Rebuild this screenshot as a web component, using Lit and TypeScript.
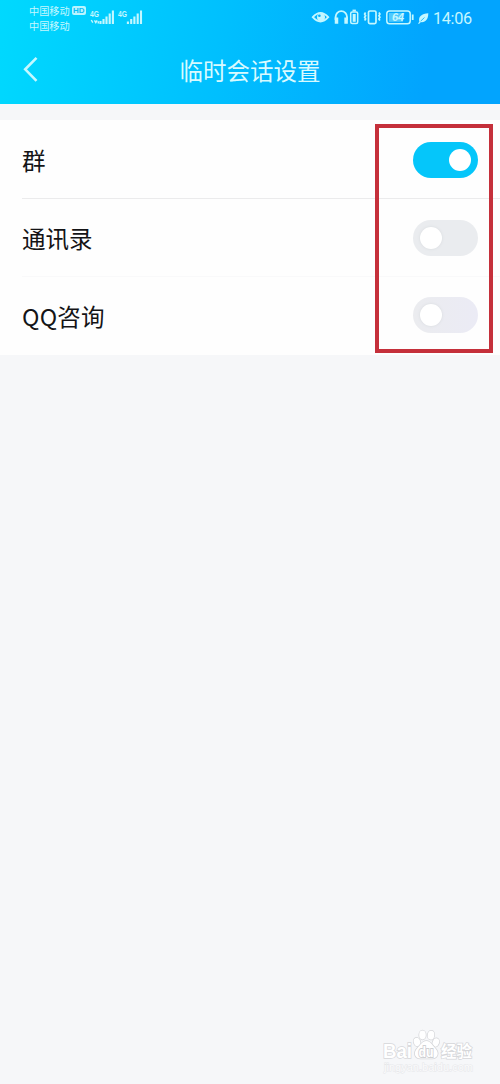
import { LitElement, html, css } from "lit";
import { customElement, property, state } from "lit/decorators.js";
import { classMap } from "lit/directives/class-map.js";

@customElement("status-bar")
class StatusBar extends LitElement {
  static styles = css`
    :host { display: flex; height: 36px; color: #c4f7ff; justify-content: space-between; }
    .left { display: flex; padding-left: 29px; }
    .carriers { display: flex; flex-direction: column; padding-top: 2.5px; font-size: 10.2px; line-height: 15.2px; white-space: nowrap; }
    .line { display: flex; align-items: center; height: 15.2px; }
    .hd { margin-left: 2px; width: 14px; height: 9px; border-radius: 2px; background: #b9f5ff; color: #08bdf8;
      font: bold 8px/9px "Liberation Sans", sans-serif; text-align: center; }
    .signal { margin-left: 3px; }
    svg { display: block; }
    .right { display: flex; padding-right: 28px; }
    .time { width: 39px; font: 16.3px/37px Roboto, sans-serif; letter-spacing: -.35px; margin-left: 2px; white-space: nowrap; }
    .g { font: bold 9px "Liberation Sans", sans-serif; fill: currentColor; }
    .level { font: italic bold 11px "Liberation Sans", sans-serif; fill: currentColor; }
  `;
  render() {
    return html`
      <div class="left">
        <div class="carriers">
          <div class="line">中国移动<span class="hd">HD</span></div>
          <div class="line">中国移动</div>
        </div>
        <svg class="signal" width="56" height="36" viewBox="89 0 56 36" fill="none">
          <text class="g" x="90" y="16.7" textLength="9" lengthAdjust="spacingAndGlyphs">4G</text>
          <path d="M91.300 20l1.500 2.600M94.500 20.300l1.300 2.300 1.300-2.300M98.300 21.300v2.200" stroke="currentColor" stroke-width="1.400"/>
          <path d="M100.500 21v3M103.500 19v5M106.500 16.500V24M109.700 13.500V24M112.900 10.500V24" stroke="currentColor" stroke-width="2.100"/>
          <text class="g" x="118" y="16.7" textLength="9" lengthAdjust="spacingAndGlyphs">4G</text>
          <path d="M127.900 21.500V24M131.200 19V24M134.400 16.500V24M137.700 13.500V24M141 10.500V24" stroke="currentColor" stroke-width="2.100"/>
        </svg>
      </div>
      <div class="right">
        <svg width="120" height="36" viewBox="311 0 120 36" fill="none" stroke="currentColor">
          <path d="M312.800 17.200Q320.500 8.600 328.200 17.200Q320.500 25.800 312.800 17.200Z" stroke-width="1.900"/>
          <circle cx="321" cy="17.200" r="4" fill="currentColor" stroke="none"/>
          <circle cx="319.400" cy="15.700" r="1.300" fill="#03aefd" stroke="none"/>
          <path d="M335.600 20V17a5.700 5.900 0 0 1 11.400 0v3" stroke-width="1.900"/>
          <path d="M336.500 17.500v6.200M346.100 17.500v6.200" stroke-width="3.500"/>
          <rect x="350.700" y="12" width="7" height="11.600" rx="1.500" stroke-width="1.500"/>
          <path d="M352.500 10.500h3.400" stroke-width="1.800"/><path d="M354.200 14v7.800" stroke-width="3"/>
          <rect x="368.500" y="11" width="7.500" height="12.600" rx="1.300" stroke-width="1.700"/>
          <path d="M365.600 12.500l-1 1.600 1 1.600-1 1.600 1 1.600-1 1.600M378.900 12.500l1 1.600-1 1.600 1 1.600-1 1.600 1 1.600" stroke-width="1.700"/>
          <rect x="386.800" y="11" width="23.400" height="12.800" rx="2.800" stroke-width="1.500"/>
          <rect x="389" y="13" width="14" height="8.800" fill="currentColor" opacity=".4" stroke="none"/>
          <text class="level" x="392" y="21.300" stroke="none">64</text>
          <path d="M412.700 14.500v5.500" stroke-width="1.800"/>
          <path d="M419.300 21.800c-1.300-5.400 2.500-8 9-8.500 0 6.500-3.600 10.300-9 8.500z" fill="currentColor" stroke="none"/>
          <path d="M420.500 21.300l4-3.800" stroke="#03aefd" stroke-width=".8"/><path d="M418.500 23.600l2-2" stroke-width="1.300"/>
        </svg>
        <div class="time">14:06</div>
      </div>`;
  }
}

@customElement("toggle-switch")
class ToggleSwitch extends LitElement {
  @property({ type: Boolean }) on = false;
  @property() tone = "";
  static styles = css`
    :host { display: block; }
    .track { display: flex; align-items: center; box-sizing: border-box; width: 65px; height: 36px; border-radius: 18px;
      padding: 0 7px; background: #eaecef; }
    .cool { background: linear-gradient(90deg, #ebecef, #ebebf5); }
    .on { background: #05c6fa; justify-content: flex-end; }
    .knob { width: 22px; height: 22px; border-radius: 50%; background: #fff; box-shadow: 0 0 3px #d7dade; }
    .on .knob { box-shadow: none; }
  `;
  render() {
    return html`<div class=${classMap({ track: true, on: this.on, cool: this.tone === "cool" })}><div class="knob"></div></div>`;
  }
}

@customElement("app-root")
class AppRoot extends LitElement {
  @state() rows = [
    { label: "群", on: true, tone: "" },
    { label: "通讯录", on: false, tone: "" },
    { label: "QQ咨询", on: false, tone: "cool" },
  ];
  static styles = css`
    :host { display: block; position: relative; height: 1084px; width: 500px; overflow: hidden; background: #f6f7f9;
      font-family: "Noto Sans CJK SC", sans-serif; }
    .header { height: 104px; background: linear-gradient(100deg, #00d9fe 0%, #00bffe 45%, #02a4fe 85%); }
    .nav { display: grid; grid-template-columns: 60px 1fr 60px; height: 68px; align-items: center; }
    .back { display: block; margin-left: 22px; }
    .title { color: #d8faff; font-size: 23.5px; line-height: 34px; text-align: center; white-space: nowrap; }
    .list { margin-top: 16px; background: #fefefe; height: 235px; }
    .row { display: flex; align-items: center; justify-content: space-between; box-sizing: border-box; height: 78px;
      margin-left: 22px; padding-right: 22px; color: #141416; font-size: 23.5px; line-height: 34px; }
    .row:first-child { padding-top: 2px; }
    .row + .row { border-top: 1px solid #f9f9fa; }
    .row:nth-child(2) { border-top-color: #ebebec; }
    .row:nth-child(3) { letter-spacing: .25px; }
    .row:nth-child(3) toggle-switch { margin-top: -1px; }
    .highlight { position: absolute; left: 375px; top: 124px; width: 118px; height: 229px; box-sizing: border-box; border: 4px solid #c5303b; }
    .watermark { position: absolute; left: 382px; top: 1028px; display: block; }
    .brand { font: bold 20.5px "Liberation Sans", sans-serif; }
    .cn { font: bold 16px "Noto Sans CJK SC", sans-serif; }
    .mark { fill: #fff; stroke: #d5d6d9; stroke-width: 1.5px; paint-order: stroke; }
    .du { font: bold 14px "Liberation Sans", sans-serif; fill: #fff; stroke: #cfd0d3; stroke-width: 1.8px; paint-order: stroke; }
    .url { font: 10.5px "Liberation Sans", sans-serif; fill: #fbfbfc; stroke: #e6e7ea; stroke-width: 1px; paint-order: stroke; }
  `;
  render() {
    return html`
      <div class="header">
        <status-bar></status-bar>
        <div class="nav">
          <svg class="back" width="18" height="28" viewBox="0 0 18 28" fill="none" stroke="#c5f8ff" stroke-width="2.6">
            <path d="M14.500 1.800L3.200 13.300L14.500 24.800"/>
          </svg>
          <div class="title">临时会话设置</div>
        </div>
      </div>
      <div class="list">
        ${this.rows.map((r) => html`<div class="row"><span>${r.label}</span><toggle-switch .on=${r.on} .tone=${r.tone}></toggle-switch></div>`)}
      </div>
      <div class="highlight"></div>
      <svg class="watermark" width="96" height="50" viewBox="382 1028 96 50">
        <text class="mark brand" x="383" y="1058" textLength="29" lengthAdjust="spacingAndGlyphs">Bai</text>
        <g class="mark">
          <ellipse cx="417" cy="1042" rx="3.200" ry="4.300" transform="rotate(-18 417 1042)"/>
          <ellipse cx="422.500" cy="1035" rx="3.300" ry="4.400"/>
          <ellipse cx="431" cy="1035.200" rx="3.300" ry="4.400" transform="rotate(8 431 1035)"/>
          <ellipse cx="436" cy="1042.500" rx="3.200" ry="4.200" transform="rotate(20 436 1042)"/>
          <path d="M426.500 1041c4 0 5.500 4 8.500 7 5 5 2.500 10.500-3 10.500h-11.500c-6 0-7.500-6-3-10.500 3-3 4.500-7 9-7z"/>
        </g>
        <text class="du" x="418.500" y="1056.500" textLength="15" lengthAdjust="spacingAndGlyphs">du</text>
        <text class="mark cn" x="441" y="1056.500" textLength="31" lengthAdjust="spacingAndGlyphs">经验</text>
        <text class="url" x="384" y="1070.500" textLength="89" lengthAdjust="spacingAndGlyphs">jingyan.baidu.com</text>
      </svg>`;
  }
}
